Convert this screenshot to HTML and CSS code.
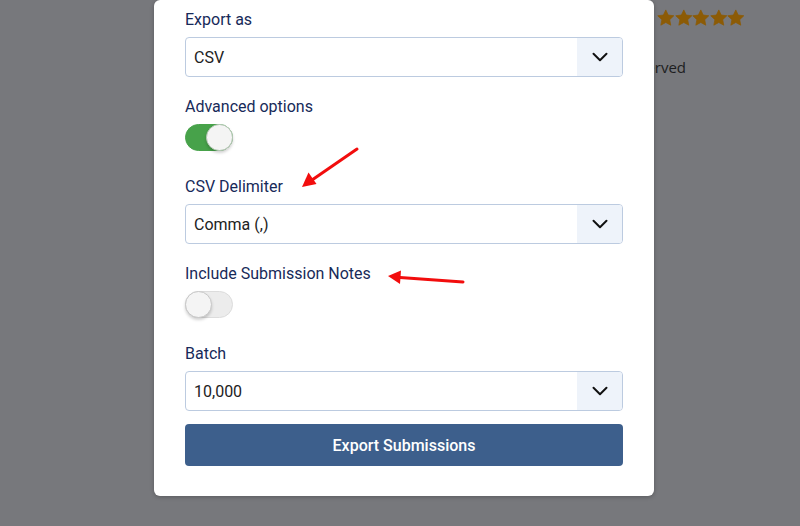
FILE: index.html
```html
<!DOCTYPE html>
<html lang="en">
<head>
<meta charset="utf-8">
<title>Export Submissions</title>
<link rel="stylesheet" href="styles.css">
</head>
<body>
<div class="page">
  <div class="stars">
    <svg class="star" viewBox="0 0 24 24"><polygon points="12,1 15.29,7.97 22.94,8.95 17.33,14.23 18.76,21.8 12,18.1 5.24,21.8 6.67,14.23 1.06,8.95 8.71,7.97"/></svg>
    <svg class="star" viewBox="0 0 24 24"><polygon points="12,1 15.29,7.97 22.94,8.95 17.33,14.23 18.76,21.8 12,18.1 5.24,21.8 6.67,14.23 1.06,8.95 8.71,7.97"/></svg>
    <svg class="star" viewBox="0 0 24 24"><polygon points="12,1 15.29,7.97 22.94,8.95 17.33,14.23 18.76,21.8 12,18.1 5.24,21.8 6.67,14.23 1.06,8.95 8.71,7.97"/></svg>
    <svg class="star" viewBox="0 0 24 24"><polygon points="12,1 15.29,7.97 22.94,8.95 17.33,14.23 18.76,21.8 12,18.1 5.24,21.8 6.67,14.23 1.06,8.95 8.71,7.97"/></svg>
    <svg class="star" viewBox="0 0 24 24"><polygon points="12,1 15.29,7.97 22.94,8.95 17.33,14.23 18.76,21.8 12,18.1 5.24,21.8 6.67,14.23 1.06,8.95 8.71,7.97"/></svg>
  </div>
  <p class="copyright">All rights reserved</p>
</div>

<div class="modal">
  <div class="field">
    <label class="label">Export as</label>
    <div class="select">
      <span class="value">CSV</span>
      <span class="caret"><svg viewBox="0 0 16 10"><path d="M1.5 1.8L8 8.2l6.5-6.4"/></svg></span>
    </div>
  </div>

  <div class="field field-toggle">
    <label class="label">Advanced options</label>
    <div class="toggle on"><span class="knob"></span></div>
  </div>

  <div class="field">
    <label class="label">CSV Delimiter</label>
    <div class="select">
      <span class="value">Comma (,)</span>
      <span class="caret"><svg viewBox="0 0 16 10"><path d="M1.5 1.8L8 8.2l6.5-6.4"/></svg></span>
    </div>
  </div>

  <div class="field field-toggle">
    <label class="label">Include Submission Notes</label>
    <div class="toggle"><span class="knob"></span></div>
  </div>

  <div class="field">
    <label class="label">Batch</label>
    <div class="select">
      <span class="value">10,000</span>
      <span class="caret"><svg viewBox="0 0 16 10"><path d="M1.5 1.8L8 8.2l6.5-6.4"/></svg></span>
    </div>
  </div>

  <button class="btn">Export Submissions</button>
</div>

<svg class="annotations" viewBox="0 0 800 526" width="800" height="526">
  <line x1="357" y1="149" x2="312" y2="180" />
  <polygon points="302,187 308.5,172.5 316.5,184" />
  <line x1="463" y1="282" x2="400" y2="277.5" />
  <polygon points="388,276 401,270.5 400,284" />
</svg>
</body>
</html>
```

FILE: styles.css
```css
* { box-sizing: border-box; }

html, body {
  margin: 0;
  padding: 0;
}

body {
  width: 800px;
  height: 526px;
  overflow: hidden;
  background: #77787c;
  position: relative;
  font-family: Roboto, "Liberation Sans", sans-serif;
}

.page {
  padding: 8px 0 0 657px;
}

.stars {
  display: flex;
  gap: 0;
}

.star {
  width: 17.6px;
  height: 20px;
  fill: #8c5b05;
  stroke: #8c5b05;
  stroke-width: 1;
  stroke-linejoin: round;
}

.copyright {
  margin: 29px 0 0 -657px;
  width: 686px;
  text-align: right;
  font-family: "Open Sans", "Noto Sans", sans-serif;
  font-size: 15px;
  line-height: 20px;
  color: #1d1e21;
}

.modal {
  position: absolute;
  left: 154px;
  bottom: 30px;
  width: 500px;
  background: #fff;
  border-radius: 6px;
  box-shadow: 0 1px 4px rgba(0, 0, 0, 0.25);
  padding: 10px 31px 30px 31px;
  display: flex;
  flex-direction: column;
}

.field {
  display: flex;
  flex-direction: column;
  margin-bottom: 20px;
}

.field-toggle {
  margin-bottom: 26px;
}

.label {
  font-size: 16px;
  line-height: 20px;
  color: #172a59;
  margin-bottom: 7px;
}

.select {
  display: flex;
  height: 40px;
  border: 1px solid #bccbe0;
  border-radius: 4px;
  overflow: hidden;
}

.value {
  flex: 1;
  display: flex;
  align-items: center;
  padding-left: 8px;
  font-size: 16px;
  color: #222;
}

.caret {
  width: 45px;
  background: #eef3fa;
  display: flex;
  align-items: center;
  justify-content: center;
}

.caret svg {
  width: 16px;
  height: 10px;
  fill: none;
  stroke: #111;
  stroke-width: 2;
  stroke-linecap: round;
  stroke-linejoin: round;
}

.toggle {
  width: 48px;
  height: 27px;
  border-radius: 14px;
  background: #ececec;
  border: 1px solid #dcdcdc;
  position: relative;
}

.toggle.on {
  background: #47a24a;
  border-color: #47a24a;
}

.knob {
  position: absolute;
  top: -1px;
  left: -1px;
  width: 27px;
  height: 27px;
  border-radius: 50%;
  background: #f4f4f4;
  border: 1px solid #c8c8c8;
  box-shadow: 0 2px 3px rgba(0, 0, 0, 0.18);
}

.toggle.on .knob {
  left: auto;
  right: -1px;
  border-color: #b9c9b9;
}

.btn {
  margin-top: -7px;
  height: 42px;
  border: none;
  border-radius: 4px;
  background: #3d5f8c;
  color: #fff;
  font-family: Roboto, "Liberation Sans", sans-serif;
  font-size: 16px;
  font-weight: 500;
}

.annotations {
  position: absolute;
  left: 0;
  top: 0;
  pointer-events: none;
}

.annotations line {
  stroke: #f20d0d;
  stroke-width: 3;
  stroke-linecap: round;
}

.annotations polygon {
  fill: #f20d0d;
}
```
